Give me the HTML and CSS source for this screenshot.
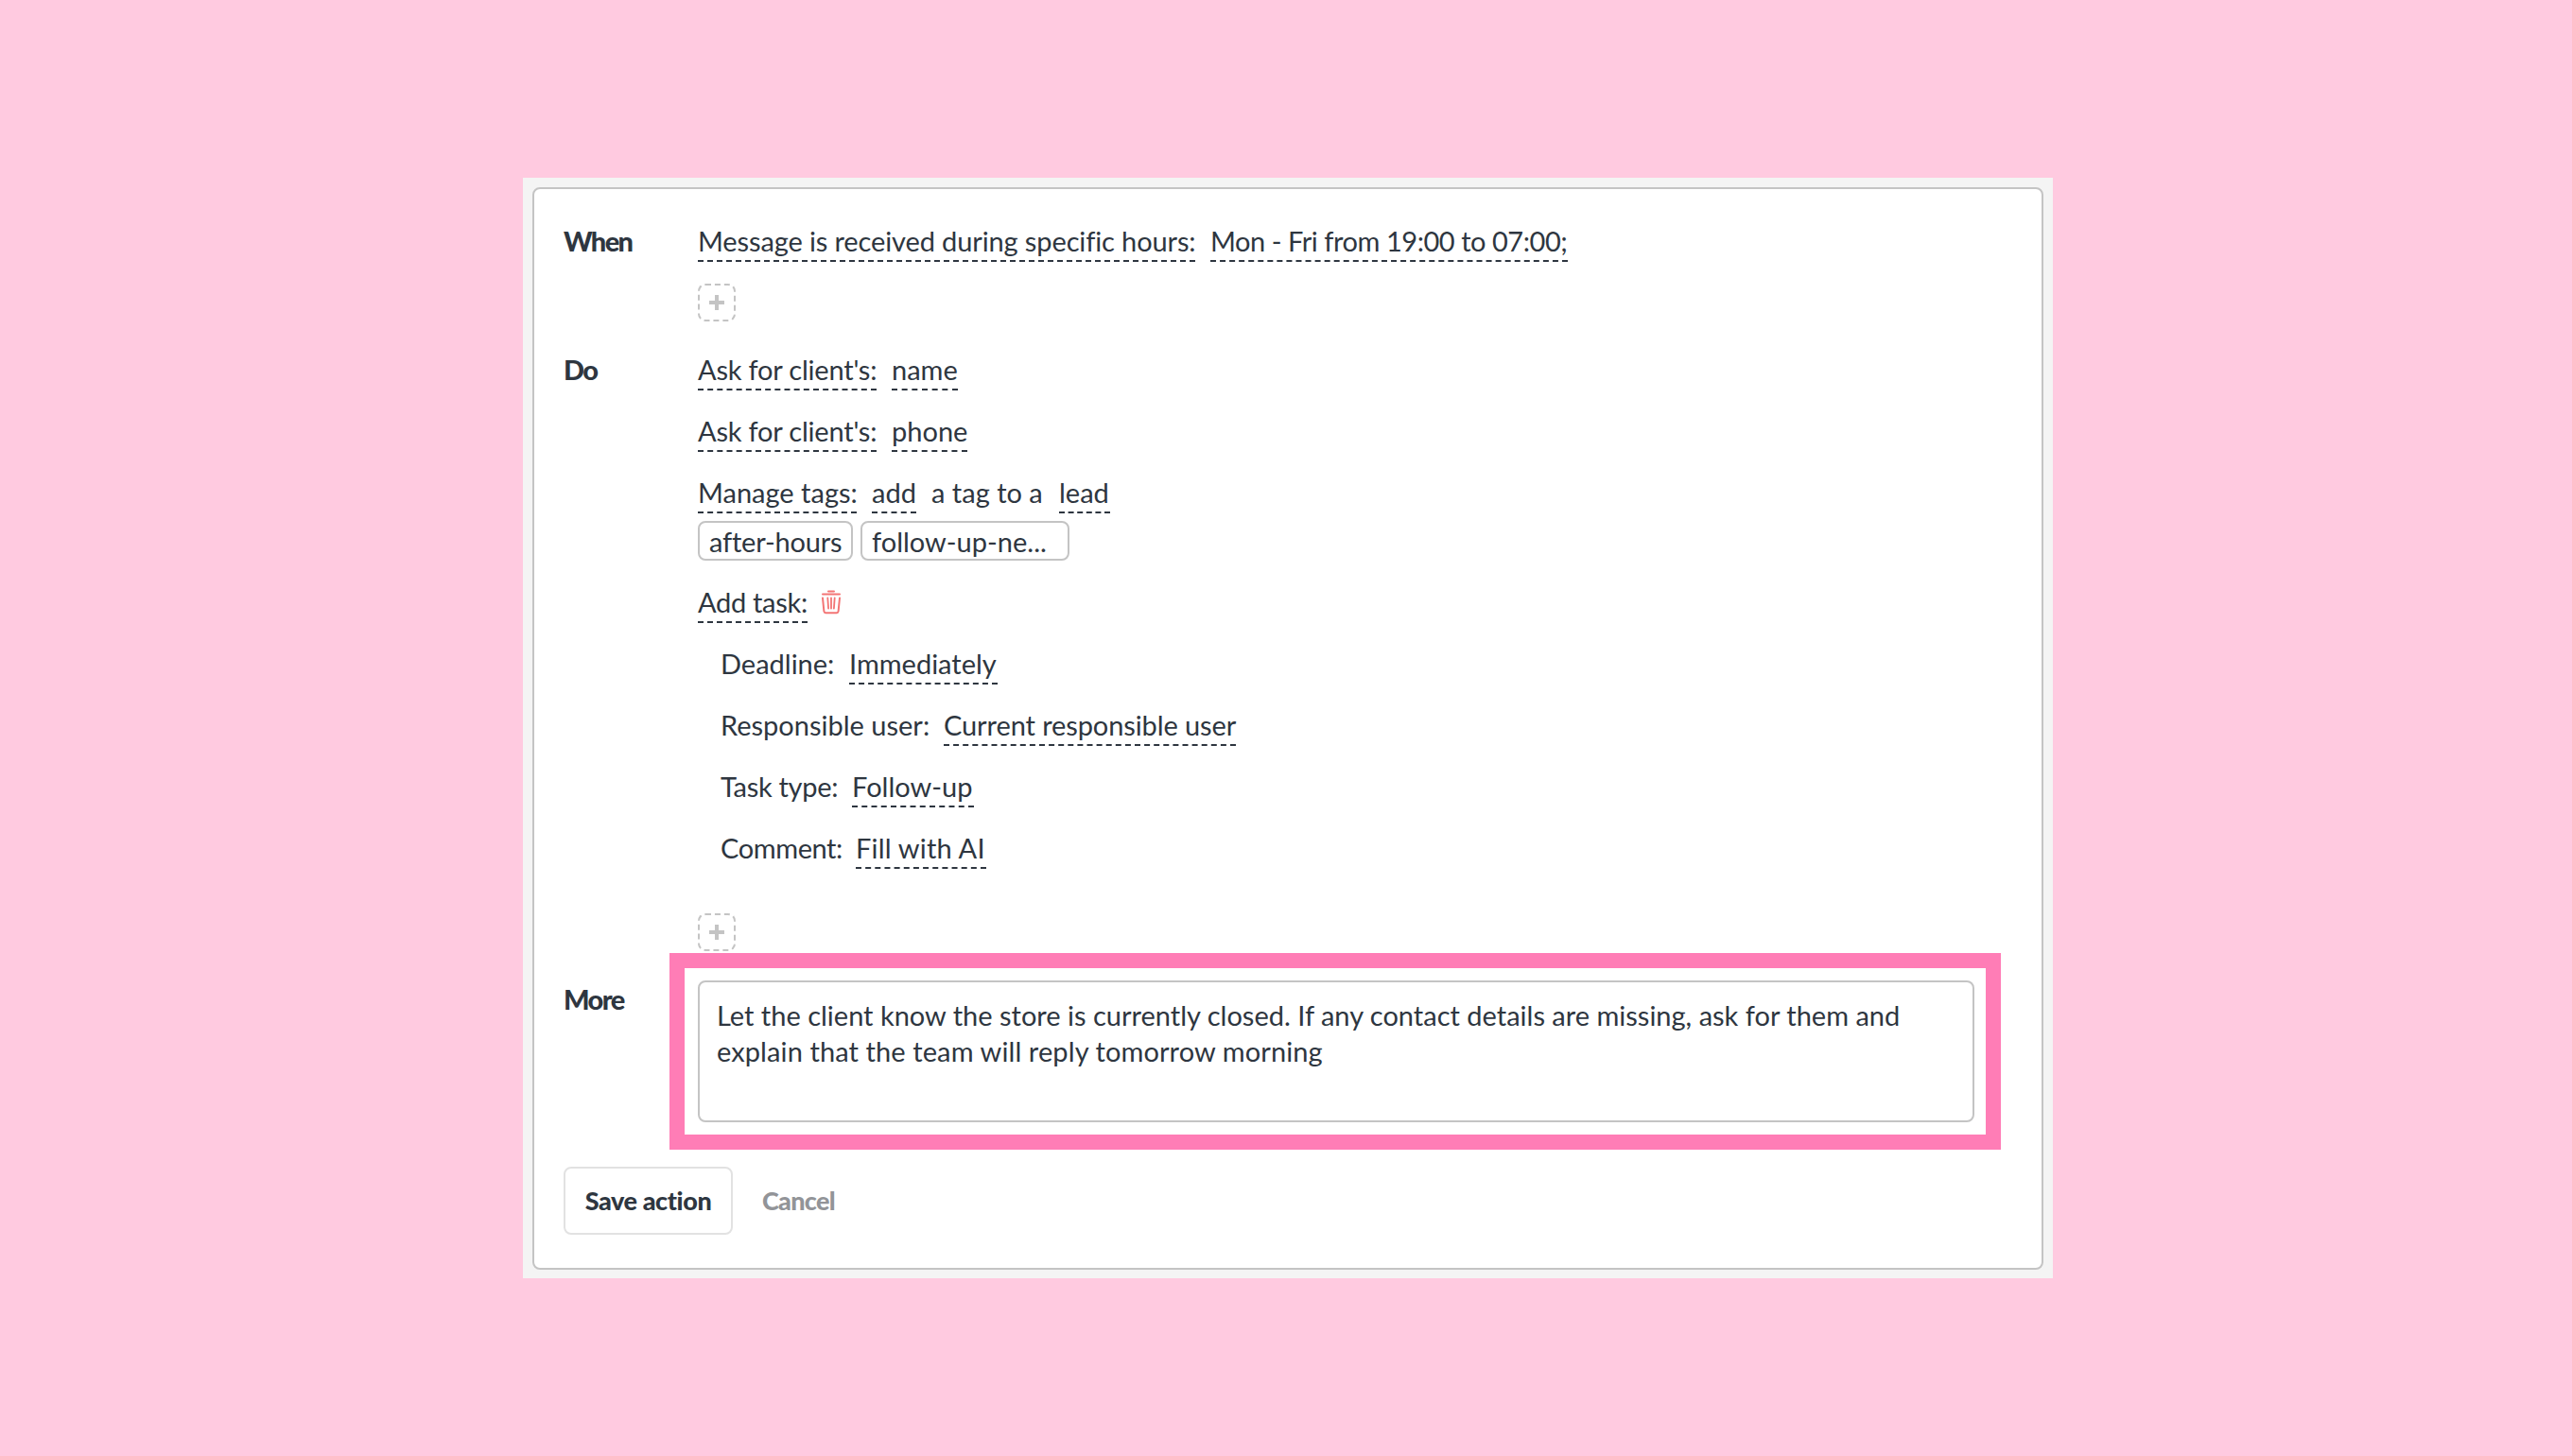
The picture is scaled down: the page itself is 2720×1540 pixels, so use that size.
FILE: index.html
```html
<!DOCTYPE html>
<html lang="en">
<head>
    <meta charset="UTF-8">
    <meta name="viewport" content="width=device-width, initial-scale=1.0">
    <title>Edit action</title>
    <link rel="stylesheet" href="styles.css">
</head>
<body>
    <div class="panel">
        <div class="card">
            <!-- When -->
            <div class="section">
                <div class="label label-when">When</div>
                <div class="content">
                    <div class="row">
                        <span class="field f-message">Message is received during specific hours:</span>
                        <span class="field f-hours">Mon - Fri from 19:00 to 07:00;</span>
                    </div>
                    <button class="add">
                        <svg width="16" height="16" viewBox="0 0 16 16"><path d="M8 0v16M0 8h16" stroke="#c4c4c4" stroke-width="4"/></svg>
                    </button>
                </div>
            </div>

            <!-- Do -->
            <div class="section section-do">
                <div class="label label-do">Do</div>
                <div class="content">
                    <div class="row">
                        <span class="field f-ask">Ask for client's:</span>
                        <span class="field f-name">name</span>
                    </div>
                    <div class="row">
                        <span class="field f-ask">Ask for client's:</span>
                        <span class="field f-phone">phone</span>
                    </div>
                    <div class="row">
                        <span class="field f-manage">Manage tags:</span>
                        <span class="field f-add">add</span>
                        <span class="text t-tag">a tag to a</span>
                        <span class="field f-lead">lead</span>
                    </div>
                    <div class="tags">
                        <span class="tag tag-hours">after-hours</span>
                        <span class="tag tag-follow">follow-up-ne...</span>
                    </div>
                    <div class="row row-task">
                        <span class="field f-task">Add task:</span>
                        <svg class="trash" width="22" height="26" viewBox="0 0 22 26" fill="none" stroke="#f37575" stroke-width="2" stroke-linecap="round" stroke-linejoin="round">
                            <path d="M8 1.5h6M2 4.5h18M2 8.5l1.4 14q.2 1.7 1.9 1.7h11.4q1.7 0 1.9-1.7L20 8.5"/>
                            <path d="M7.3 8.5l.8 11M11 8.5v11M14.7 8.5l-.8 11" stroke-width="1.8"/>
                        </svg>
                    </div>
                    <div class="params">
                        <div class="row">
                            <span class="text t-deadline">Deadline:</span>
                            <span class="field f-immediately">Immediately</span>
                        </div>
                        <div class="row">
                            <span class="text t-user">Responsible user:</span>
                            <span class="field f-user">Current responsible user</span>
                        </div>
                        <div class="row">
                            <span class="text t-type">Task type:</span>
                            <span class="field f-type">Follow-up</span>
                        </div>
                        <div class="row">
                            <span class="text t-comment">Comment:</span>
                            <span class="field f-comment">Fill with AI</span>
                        </div>
                    </div>
                    <button class="add add-do">
                        <svg width="16" height="16" viewBox="0 0 16 16"><path d="M8 0v16M0 8h16" stroke="#c4c4c4" stroke-width="4"/></svg>
                    </button>
                </div>
            </div>

            <!-- More -->
            <div class="section section-more">
                <div class="label label-more">More</div>
                <div class="highlight">
                    <div class="message">Let the client know the store is currently closed. If any contact details are missing, ask for them and<br><span class="line2">explain that the team will reply tomorrow morning</span></div>
                </div>
            </div>

            <div class="actions">
                <button class="save">Save action</button>
                <button class="cancel">Cancel</button>
            </div>
        </div>
    </div>
</body>
</html>
```

FILE: styles.css
```css
* {
    box-sizing: border-box;
}
body {
    margin: 0;
    height: 1540px;
    padding: 188px 0 0 553px;
    background-color: #ffcae0;
    font-family: Lato, "Open Sans", sans-serif;
    font-size: 29px;
    line-height: 34px;
    color: #2e3640;
}
button {
    font-family: inherit;
    background: none;
    padding: 0;
    margin: 0;
}
.panel {
    width: 1618px;
    height: 1164px;
    padding: 10px;
    background-color: #f4f4f4;
}
.card {
    width: 1598px;
    height: 1145px;
    padding: 38px 32px 0 31px;
    background-color: #fff;
    border: 2px solid #c4c4c4;
    border-radius: 8px;
}
.section {
    display: flex;
}
.section-do {
    margin-top: 34px;
}
.section-more {
    margin-top: 2px;
}
.label {
    width: 142px;
    flex-shrink: 0;
    font-weight: 900;
    letter-spacing: -1.6px;
}
.row {
    display: flex;
    height: 39px;
    margin-bottom: 26px;
    white-space: nowrap;
}
.field {
    height: 39px;
    margin-right: 16px;
    border-bottom: 2px dashed #2e3640;
}
.text {
    margin-right: 16px;
}

/* field widths */
.f-message {
    width: 526px;
    letter-spacing: -0.12px;
}
.f-hours {
    width: 378px;
    letter-spacing: -0.45px;
}
.f-ask {
    width: 189px;
    letter-spacing: -0.2px;
}
.f-name {
    width: 70px;
}
.f-phone {
    width: 80px;
}
.f-manage {
    width: 168px;
}
.f-add {
    width: 47px;
}
.t-tag {
    width: 119px;
}
.f-lead {
    width: 54px;
}
.f-task {
    width: 116px;
    letter-spacing: -0.3px;
}
.t-deadline {
    width: 120px;
}
.f-immediately {
    width: 157px;
}
.t-user {
    width: 220px;
}
.f-user {
    width: 309px;
    letter-spacing: -0.1px;
}
.t-type {
    width: 123px;
    letter-spacing: -0.3px;
}
.f-type {
    width: 129px;
}
.t-comment {
    width: 127px;
    letter-spacing: -0.4px;
}
.f-comment {
    width: 138px;
    letter-spacing: 0.2px;
}

.tags {
    display: flex;
    gap: 8px;
    margin-top: -18px;
    margin-bottom: 27px;
}
.tag {
    height: 42px;
    padding: 1px 10px 0;
    border: 2px solid #c4c4c4;
    border-radius: 8px;
    line-height: 38px;
    white-space: nowrap;
}
.tag-hours {
    width: 164px;
    letter-spacing: -0.2px;
}
.tag-follow {
    width: 221px;
}
.trash {
    margin: 4px 0 0 -2px;
}
.params {
    padding-left: 24px;
}
.add {
    display: flex;
    align-items: center;
    justify-content: center;
    width: 40px;
    height: 40px;
    margin-top: -3px;
    border: 2px dashed #c4c4c4;
    border-radius: 8px;
}
.add-do {
    margin-top: 47px;
}
.label-more {
    padding-top: 32px;
}
.highlight {
    width: 1408px;
    height: 208px;
    margin-left: -30px;
    padding: 13px 12px 13px 14px;
    border: 16px solid #ff7db6;
}
.message {
    height: 150px;
    padding: 16px 18px;
    border: 2px solid #c4c4c4;
    border-radius: 8px;
    line-height: 37.5px;
    white-space: nowrap;
}
.line2 {
    letter-spacing: 0.1px;
}
.actions {
    display: flex;
    margin-top: 18px;
}
.save, .cancel {
    height: 72px;
    padding-bottom: 2px;
    border: 2px solid #e2e2e2;
    border-radius: 8px;
    font-size: 27px;
    font-weight: 900;
    color: #2e3640;
    white-space: nowrap;
}
.save {
    width: 179px;
    letter-spacing: -0.4px;
}
.cancel {
    margin-left: 29px;
    border-color: transparent;
    letter-spacing: -0.7px;
    color: #929498;
}
```
